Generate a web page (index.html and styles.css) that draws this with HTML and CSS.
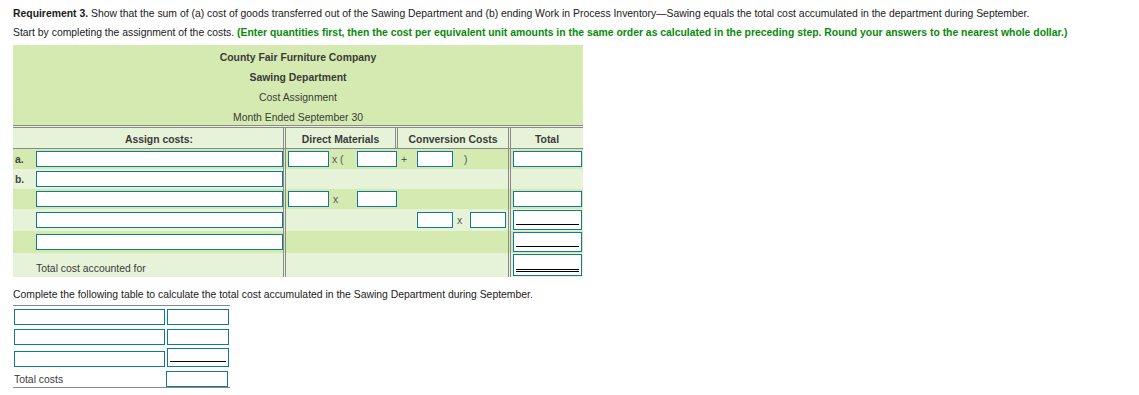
FILE: index.html
```html
<!DOCTYPE html>
<html>
<head>
<meta charset="utf-8">
<title>Cost Assignment</title>
<link rel="stylesheet" href="styles.css">
</head>
<body>
<p class="intro"><b>Requirement 3.</b> Show that the sum of (a) cost of goods transferred out of the Sawing Department and (b) ending Work in Process Inventory—Sawing equals the total cost accumulated in the department during September.</p>
<p class="intro">Start by completing the assignment of the costs. <b class="hint">(Enter quantities first, then the cost per equivalent unit amounts in the same order as calculated in the preceding step. Round your answers to the nearest whole dollar.)</b></p>

<div class="sheet">
  <div class="title">
    <div class="strong">County Fair Furniture Company</div>
    <div class="strong">Sawing Department</div>
    <div>Cost Assignment</div>
    <div>Month Ended September 30</div>
  </div>

  <div class="head">
    <div class="h-lab"></div>
    <div class="h-assign">Assign costs:</div>
    <div class="h-col">Direct Materials</div>
    <div class="h-col">Conversion Costs</div>
    <div class="h-col">Total</div>
  </div>

  <div class="row dark">
    <div class="lab">a.</div>
    <div class="name"><span class="box w-name"></span></div>
    <div class="mid">
      <span class="box w41 g1"></span><span class="op g2 p3">x (</span><span class="box w40 g3"></span><span class="op g4 p4">+</span><span class="box w36 g5"></span><span class="op g6 p12">)</span>
    </div>
    <div class="tot"><span class="box w-tot"></span></div>
  </div>

  <div class="row light">
    <div class="lab">b.</div>
    <div class="name"><span class="box w-name"></span></div>
    <div class="mid"></div>
    <div class="tot"></div>
  </div>

  <div class="row dark">
    <div class="lab"></div>
    <div class="name"><span class="box w-name"></span></div>
    <div class="mid">
      <span class="box w41 g1"></span><span class="op g2 p4">x</span><span class="box w40 g3"></span>
    </div>
    <div class="tot"><span class="box w-tot"></span></div>
  </div>

  <div class="row light tall">
    <div class="lab"></div>
    <div class="name"><span class="box w-name"></span></div>
    <div class="mid">
      <span class="box w36 g5"></span><span class="op g6 p4">x</span><span class="box w36 g7"></span>
    </div>
    <div class="tot"><span class="box w-tot ul"><i></i></span></div>
  </div>

  <div class="row dark tall">
    <div class="lab"></div>
    <div class="name"><span class="box w-name"></span></div>
    <div class="mid"></div>
    <div class="tot"><span class="box w-tot ul"><i></i></span></div>
  </div>

  <div class="row light last">
    <div class="lab"></div>
    <div class="name total-text">Total cost accounted for</div>
    <div class="mid"></div>
    <div class="tot"><span class="box w-tot dbl"><i></i></span></div>
  </div>
</div>

<p class="lead">Complete the following table to calculate the total cost accumulated in the Sawing Department during September.</p>

<div class="calc">
  <div class="crow r1">
    <span class="box w150"></span>
    <span class="box w62"></span>
  </div>
  <div class="crow r2">
    <span class="box w150"></span>
    <span class="box w62"></span>
  </div>
  <div class="crow r3">
    <span class="box w150"></span>
    <span class="box w62 ul2"><i></i></span>
  </div>
  <div class="crow r4">
    <span class="ctext">Total costs</span>
    <span class="box w62"></span>
  </div>
</div>
</body>
</html>
```

FILE: styles.css
```css
body {
  margin: 0;
  padding: 4px 13px 0;
  font-family: "Liberation Sans", Arial, sans-serif;
  font-size: 10.4px;
  color: #1a1a1a;
  background: #fff;
}

.intro {
  margin: 0;
  line-height: 19px;
  white-space: nowrap;
}

.hint {
  color: #0a8a0a;
}

.sheet {
  margin-top: 3px;
  width: 570px;
  color: #3a3a3a;
}

.title {
  height: 80px;
  box-sizing: border-box;
  padding-top: 3px;
  background: #d4eab1;
  text-align: center;
  line-height: 20px;
  overflow: hidden;
}

.strong {
  font-weight: bold;
}

.head {
  display: grid;
  grid-template-columns: 22px 248px 112px 113px 75px;
  height: 20px;
  border-top: 3px double #8a8a8a;
  border-bottom: 1px solid #8a8a8a;
  background: #e6f3d8;
  font-weight: bold;
  text-align: center;
}

.head > div {
  box-sizing: border-box;
  padding-top: 4px;
  line-height: 16px;
}

.head .h-col {
  border-left: 3px double #8a8a8a;
}

.row {
  display: grid;
  grid-template-columns: 22px 248px 225px 75px;
  height: 20px;
  align-items: center;
}

.row.tall {
  height: 22px;
}

.row.last {
  height: 24px;
}

.row > div {
  box-sizing: border-box;
  height: 100%;
  display: flex;
  align-items: center;
}

.dark {
  background: #d4eab1;
}

.light {
  background: #e6f3d8;
}

.lab {
  padding-left: 2px;
  font-weight: bold;
  color: #444;
}

.name {
  padding-left: 1px;
}

.row > .total-text {
  align-items: flex-end;
  padding-bottom: 2px;
  line-height: 12px;
}

.row > .mid {
  display: grid;
  grid-template-columns: 41px 28px 40px 20px 36px 17px 36px;
  align-items: center;
  padding-left: 2px;
  border-left: 3px double #8a8a8a;
}

.tot {
  padding-left: 2px;
  border-left: 3px double #8a8a8a;
}

.g1 { grid-column: 1; }
.g2 { grid-column: 2; }
.g3 { grid-column: 3; }
.g4 { grid-column: 4; }
.g5 { grid-column: 5; }
.g6 { grid-column: 6; }
.g7 { grid-column: 7; }

.op {
  color: #555;
  line-height: 12px;
  padding-top: 2px;
}

.p3 { padding-left: 3px; }
.p4 { padding-left: 4px; }
.p12 { padding-left: 11px; }

.box {
  display: block;
  box-sizing: border-box;
  height: 16px;
  border: 1px solid #0f7a97;
  background: #fff;
}

.w-name { width: 247px; }
.w41 { width: 41px; }
.w40 { width: 40px; }
.w36 { width: 36px; }
.w-tot { width: 69px; }
.w150 { width: 151px; }
.w62 { width: 62px; }

.box.ul,
.box.dbl,
.box.ul2 {
  display: flex;
  align-items: flex-end;
  padding: 0 2px 4px;
}

.box.ul {
  height: 20px;
}

.box.dbl {
  height: 22px;
  padding-bottom: 3px;
}

.box.ul2 {
  height: 19px;
  padding-bottom: 4px;
}

.box i {
  display: block;
  flex: 1;
  height: 0;
  border-bottom: 1px solid #000;
}

.box.dbl i {
  border-bottom: 3px double #000;
}

.lead {
  margin: 11px 0 0;
  line-height: 14px;
  color: #1a1a1a;
}

.calc {
  margin-top: 3px;
  width: 217px;
  border-top: 1px solid #8a8a8a;
  border-bottom: 1px solid #8a8a8a;
}

.crow {
  display: grid;
  grid-template-columns: 153px 64px;
  align-items: end;
}

.crow .box:first-child {
  margin-left: 1px;
}

.crow .box + .box {
  margin-left: 1px;
}

.r1 { padding: 3px 0 3px; }
.r2 { padding: 1px 0 2px; }
.r3 { padding: 1px 0 3px; }
.r4 { padding: 1px 0 0; }

.ctext {
  padding-left: 1px;
  line-height: 12px;
  padding-bottom: 1px;
  color: #3a3a3a;
}
```
